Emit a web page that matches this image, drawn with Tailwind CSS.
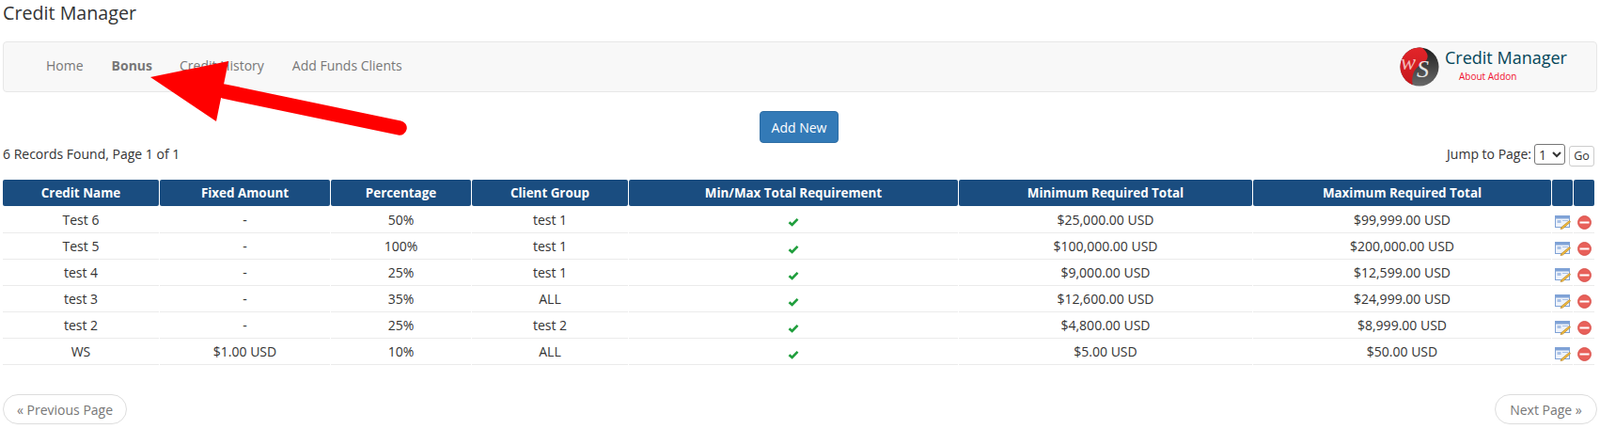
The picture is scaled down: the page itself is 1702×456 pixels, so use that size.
<!DOCTYPE html>
<html><head><meta charset="utf-8">
<script src="https://cdn.jsdelivr.net/npm/@tailwindcss/browser@4"></script>
</head>
<body class="bg-white text-[#333] font-['Open_Sans',sans-serif] text-[14px] relative w-[1702px] h-[456px] overflow-hidden">
<div class="px-[3px]">
  <h1 class="text-[19.7px] leading-[28px] h-[44px] text-[#333]">Credit Manager</h1>
  <nav class="h-[54px] w-[1696px] bg-[#f8f8f8] border border-[#e7e7e7] rounded-[4px] flex items-center justify-between">
    <ul class="flex pl-[30px] pb-[4px] text-[14px] text-[#777]">
      <li class="px-[15px]">Home</li>
      <li class="px-[15px] mr-[-1px] font-bold text-[#777]">Bonus</li>
      <li class="px-[15px]">Credit History</li>
      <li class="px-[15px]">Add Funds Clients</li>
    </ul>
    <div class="flex items-center pr-[31px]">
      <svg width="42" height="42" viewBox="0 0 42 42" class="mr-[6px]">
        <defs>
          <clipPath id="c"><circle cx="21" cy="21" r="20.5"/></clipPath>
          <linearGradient id="d" x1="0" y1="0" x2="0" y2="1"><stop offset="0" stop-color="#1c1c1c"/><stop offset="1" stop-color="#6a6a6a"/></linearGradient>
          <linearGradient id="r" x1="0" y1="0" x2="0" y2="1"><stop offset="0" stop-color="#e3252a"/><stop offset="1" stop-color="#c4161b"/></linearGradient>
        </defs>
        <g clip-path="url(#c)">
          <rect width="42" height="42" fill="url(#d)"/>
          <path d="M0 0H23C33 8 31 14 22 19C14 24 12 32 14 42H0Z" fill="url(#r)"/>
        </g>
        <text x="1" y="24" font-family="Liberation Serif" font-style="italic" font-size="24" fill="#f3b9b9">w</text>
        <text x="18" y="32" font-family="Liberation Serif" font-style="italic" font-size="26" fill="#e4e4e4">S</text>
      </svg>
      <div class="w-[130px] h-[40px] whitespace-nowrap">
        <div class="text-[18px] leading-[26px] mt-[-3px] text-[#04465a]">Credit Manager</div>
        <div class="text-[10px] leading-[12px] mt-[1px] pl-[15px] text-[#f01030]">About Addon</div>
      </div>
    </div>
  </nav>
  <div class="flex justify-center mt-[20px] h-[34px]">
    <button class="w-[84px] h-[34px] mr-[2px] bg-[#337ab7] border border-[#2e6da4] rounded-[4px] text-white text-[14px]">Add New</button>
  </div>
  <div class="flex justify-between items-center h-[26px] pr-[3px] mt-[-1px] mb-[14px]">
    <div class="mb-[2px]">6 Records Found, Page 1 of 1</div>
    <div class="flex items-start text-[14px] mt-[2px]">
      <span class="mr-[3px] leading-[22px]">Jump to Page:</span>
      <select class="w-[33px] h-[22px] border border-[#767676] rounded-[3px] bg-white text-[14px] mr-[4px]"><option>1</option></select>
      <button class="w-[27px] h-[22px] mt-[2px] border border-[#ccc] rounded-[3px] bg-white text-[12.5px]">Go</button>
    </div>
  </div>
  <table class="table-fixed border-separate [border-spacing:1px_0] ml-[-1px] w-[1695px] text-center text-[14px]">
    <colgroup>
      <col class="w-[166px]"><col class="w-[181px]"><col class="w-[149px]"><col class="w-[166px]"><col class="w-[350px]"><col class="w-[312px]"><col class="w-[317px]"><col class="w-[22px]"><col class="w-[22px]">
    </colgroup>
    <thead class="text-white text-[13.4px]">
      <tr class="h-[28px]">
        <th class="bg-[#1a4d80] rounded-[2px] font-bold">Credit Name</th>
        <th class="bg-[#1a4d80] rounded-[2px] font-bold">Fixed Amount</th>
        <th class="bg-[#1a4d80] rounded-[2px] font-bold">Percentage</th>
        <th class="bg-[#1a4d80] rounded-[2px] font-bold">Client Group</th>
        <th class="bg-[#1a4d80] rounded-[2px] font-bold">Min/Max Total Requirement</th>
        <th class="bg-[#1a4d80] rounded-[2px] font-bold">Minimum Required Total</th>
        <th class="bg-[#1a4d80] rounded-[2px] font-bold">Maximum Required Total</th>
        <th class="bg-[#1a4d80] rounded-[2px]"></th>
        <th class="bg-[#1a4d80] rounded-[2px]"></th>
      </tr>
    </thead>
    <tbody>
      <tr class="h-[29px]">
        <td class="border-b border-[#ebebeb]">Test 6</td><td class="border-b border-[#ebebeb]">-</td><td class="border-b border-[#ebebeb]">50%</td><td class="border-b border-[#ebebeb]">test 1</td>
        <td class="border-b border-[#ebebeb]"><svg class="inline-block mt-[3px]" width="12" height="10" viewBox="0 0 12 10"><path d="M1.5 5.2L4.6 8L10.5 1.8" fill="none" stroke="#1f9e3c" stroke-width="2.6"/></svg></td>
        <td class="border-b border-[#ebebeb]">$25,000.00 USD</td><td class="border-b border-[#ebebeb]">$99,999.00 USD</td>
        <td class="border-b border-[#ebebeb]"><svg class="inline-block mt-[3px]" width="17" height="16" viewBox="0 0 17 16"><rect x="0.5" y="1.5" width="15" height="12" fill="#eef3fb" stroke="#7fa2d6"/><rect x="1" y="2" width="14" height="2.5" fill="#7fa2d6"/><rect x="2.5" y="6" width="4" height="3" fill="#a9c1e6"/><rect x="8" y="6" width="6" height="1" fill="#a9c1e6"/><path d="M15.5 6.5L7 13.5L6 15.5L8.5 15L16.5 8Z" fill="#f2bd3c" stroke="#b5812a" stroke-width=".7"/></svg></td>
        <td class="border-b border-[#ebebeb]"><svg class="inline-block mt-[3px]" width="15" height="15" viewBox="0 0 15 15"><circle cx="7.5" cy="7.5" r="6.9" fill="#e8605a" stroke="#d9524c"/><rect x="2.5" y="6.5" width="10" height="2" fill="#fff"/></svg></td>
      </tr>
      <tr class="h-[28px]">
        <td class="border-b border-[#ebebeb]">Test 5</td><td class="border-b border-[#ebebeb]">-</td><td class="border-b border-[#ebebeb]">100%</td><td class="border-b border-[#ebebeb]">test 1</td>
        <td class="border-b border-[#ebebeb]"><svg class="inline-block mt-[3px]" width="12" height="10" viewBox="0 0 12 10"><path d="M1.5 5.2L4.6 8L10.5 1.8" fill="none" stroke="#1f9e3c" stroke-width="2.6"/></svg></td>
        <td class="border-b border-[#ebebeb]">$100,000.00 USD</td><td class="border-b border-[#ebebeb]">$200,000.00 USD</td>
        <td class="border-b border-[#ebebeb]"><svg class="inline-block mt-[3px]" width="17" height="16" viewBox="0 0 17 16"><rect x="0.5" y="1.5" width="15" height="12" fill="#eef3fb" stroke="#7fa2d6"/><rect x="1" y="2" width="14" height="2.5" fill="#7fa2d6"/><rect x="2.5" y="6" width="4" height="3" fill="#a9c1e6"/><rect x="8" y="6" width="6" height="1" fill="#a9c1e6"/><path d="M15.5 6.5L7 13.5L6 15.5L8.5 15L16.5 8Z" fill="#f2bd3c" stroke="#b5812a" stroke-width=".7"/></svg></td>
        <td class="border-b border-[#ebebeb]"><svg class="inline-block mt-[3px]" width="15" height="15" viewBox="0 0 15 15"><circle cx="7.5" cy="7.5" r="6.9" fill="#e8605a" stroke="#d9524c"/><rect x="2.5" y="6.5" width="10" height="2" fill="#fff"/></svg></td>
      </tr>
      <tr class="h-[28px]">
        <td class="border-b border-[#ebebeb]">test 4</td><td class="border-b border-[#ebebeb]">-</td><td class="border-b border-[#ebebeb]">25%</td><td class="border-b border-[#ebebeb]">test 1</td>
        <td class="border-b border-[#ebebeb]"><svg class="inline-block mt-[3px]" width="12" height="10" viewBox="0 0 12 10"><path d="M1.5 5.2L4.6 8L10.5 1.8" fill="none" stroke="#1f9e3c" stroke-width="2.6"/></svg></td>
        <td class="border-b border-[#ebebeb]">$9,000.00 USD</td><td class="border-b border-[#ebebeb]">$12,599.00 USD</td>
        <td class="border-b border-[#ebebeb]"><svg class="inline-block mt-[3px]" width="17" height="16" viewBox="0 0 17 16"><rect x="0.5" y="1.5" width="15" height="12" fill="#eef3fb" stroke="#7fa2d6"/><rect x="1" y="2" width="14" height="2.5" fill="#7fa2d6"/><rect x="2.5" y="6" width="4" height="3" fill="#a9c1e6"/><rect x="8" y="6" width="6" height="1" fill="#a9c1e6"/><path d="M15.5 6.5L7 13.5L6 15.5L8.5 15L16.5 8Z" fill="#f2bd3c" stroke="#b5812a" stroke-width=".7"/></svg></td>
        <td class="border-b border-[#ebebeb]"><svg class="inline-block mt-[3px]" width="15" height="15" viewBox="0 0 15 15"><circle cx="7.5" cy="7.5" r="6.9" fill="#e8605a" stroke="#d9524c"/><rect x="2.5" y="6.5" width="10" height="2" fill="#fff"/></svg></td>
      </tr>
      <tr class="h-[28px]">
        <td class="border-b border-[#ebebeb]">test 3</td><td class="border-b border-[#ebebeb]">-</td><td class="border-b border-[#ebebeb]">35%</td><td class="border-b border-[#ebebeb]">ALL</td>
        <td class="border-b border-[#ebebeb]"><svg class="inline-block mt-[3px]" width="12" height="10" viewBox="0 0 12 10"><path d="M1.5 5.2L4.6 8L10.5 1.8" fill="none" stroke="#1f9e3c" stroke-width="2.6"/></svg></td>
        <td class="border-b border-[#ebebeb]">$12,600.00 USD</td><td class="border-b border-[#ebebeb]">$24,999.00 USD</td>
        <td class="border-b border-[#ebebeb]"><svg class="inline-block mt-[3px]" width="17" height="16" viewBox="0 0 17 16"><rect x="0.5" y="1.5" width="15" height="12" fill="#eef3fb" stroke="#7fa2d6"/><rect x="1" y="2" width="14" height="2.5" fill="#7fa2d6"/><rect x="2.5" y="6" width="4" height="3" fill="#a9c1e6"/><rect x="8" y="6" width="6" height="1" fill="#a9c1e6"/><path d="M15.5 6.5L7 13.5L6 15.5L8.5 15L16.5 8Z" fill="#f2bd3c" stroke="#b5812a" stroke-width=".7"/></svg></td>
        <td class="border-b border-[#ebebeb]"><svg class="inline-block mt-[3px]" width="15" height="15" viewBox="0 0 15 15"><circle cx="7.5" cy="7.5" r="6.9" fill="#e8605a" stroke="#d9524c"/><rect x="2.5" y="6.5" width="10" height="2" fill="#fff"/></svg></td>
      </tr>
      <tr class="h-[28px]">
        <td class="border-b border-[#ebebeb]">test 2</td><td class="border-b border-[#ebebeb]">-</td><td class="border-b border-[#ebebeb]">25%</td><td class="border-b border-[#ebebeb]">test 2</td>
        <td class="border-b border-[#ebebeb]"><svg class="inline-block mt-[3px]" width="12" height="10" viewBox="0 0 12 10"><path d="M1.5 5.2L4.6 8L10.5 1.8" fill="none" stroke="#1f9e3c" stroke-width="2.6"/></svg></td>
        <td class="border-b border-[#ebebeb]">$4,800.00 USD</td><td class="border-b border-[#ebebeb]">$8,999.00 USD</td>
        <td class="border-b border-[#ebebeb]"><svg class="inline-block mt-[3px]" width="17" height="16" viewBox="0 0 17 16"><rect x="0.5" y="1.5" width="15" height="12" fill="#eef3fb" stroke="#7fa2d6"/><rect x="1" y="2" width="14" height="2.5" fill="#7fa2d6"/><rect x="2.5" y="6" width="4" height="3" fill="#a9c1e6"/><rect x="8" y="6" width="6" height="1" fill="#a9c1e6"/><path d="M15.5 6.5L7 13.5L6 15.5L8.5 15L16.5 8Z" fill="#f2bd3c" stroke="#b5812a" stroke-width=".7"/></svg></td>
        <td class="border-b border-[#ebebeb]"><svg class="inline-block mt-[3px]" width="15" height="15" viewBox="0 0 15 15"><circle cx="7.5" cy="7.5" r="6.9" fill="#e8605a" stroke="#d9524c"/><rect x="2.5" y="6.5" width="10" height="2" fill="#fff"/></svg></td>
      </tr>
      <tr class="h-[28px]">
        <td class="border-b border-[#ebebeb]">WS</td><td class="border-b border-[#ebebeb]">$1.00 USD</td><td class="border-b border-[#ebebeb]">10%</td><td class="border-b border-[#ebebeb]">ALL</td>
        <td class="border-b border-[#ebebeb]"><svg class="inline-block mt-[3px]" width="12" height="10" viewBox="0 0 12 10"><path d="M1.5 5.2L4.6 8L10.5 1.8" fill="none" stroke="#1f9e3c" stroke-width="2.6"/></svg></td>
        <td class="border-b border-[#ebebeb]">$5.00 USD</td><td class="border-b border-[#ebebeb]">$50.00 USD</td>
        <td class="border-b border-[#ebebeb]"><svg class="inline-block mt-[3px]" width="17" height="16" viewBox="0 0 17 16"><rect x="0.5" y="1.5" width="15" height="12" fill="#eef3fb" stroke="#7fa2d6"/><rect x="1" y="2" width="14" height="2.5" fill="#7fa2d6"/><rect x="2.5" y="6" width="4" height="3" fill="#a9c1e6"/><rect x="8" y="6" width="6" height="1" fill="#a9c1e6"/><path d="M15.5 6.5L7 13.5L6 15.5L8.5 15L16.5 8Z" fill="#f2bd3c" stroke="#b5812a" stroke-width=".7"/></svg></td>
        <td class="border-b border-[#ebebeb]"><svg class="inline-block mt-[3px]" width="15" height="15" viewBox="0 0 15 15"><circle cx="7.5" cy="7.5" r="6.9" fill="#e8605a" stroke="#d9524c"/><rect x="2.5" y="6.5" width="10" height="2" fill="#fff"/></svg></td>
      </tr>
    </tbody>
  </table>
  <div class="flex justify-between mt-[31px] w-[1696px] text-[14px] text-[#777]">
    <div class="w-[132px] h-[32px] border border-[#ddd] rounded-full flex items-center justify-center">« Previous Page</div>
    <div class="w-[109px] h-[32px] border border-[#ddd] rounded-full flex items-center justify-center">Next Page »</div>
  </div>
</div>
<svg class="absolute left-0 top-0 pointer-events-none" width="1702" height="456" viewBox="0 0 1702 456">
  <path d="M238 97L425 136" stroke="#ff0000" stroke-width="15.5" stroke-linecap="round" fill="none"/>
  <polygon points="160,82 243,65 230,129" fill="#ff0000"/>
</svg>
</body></html>
